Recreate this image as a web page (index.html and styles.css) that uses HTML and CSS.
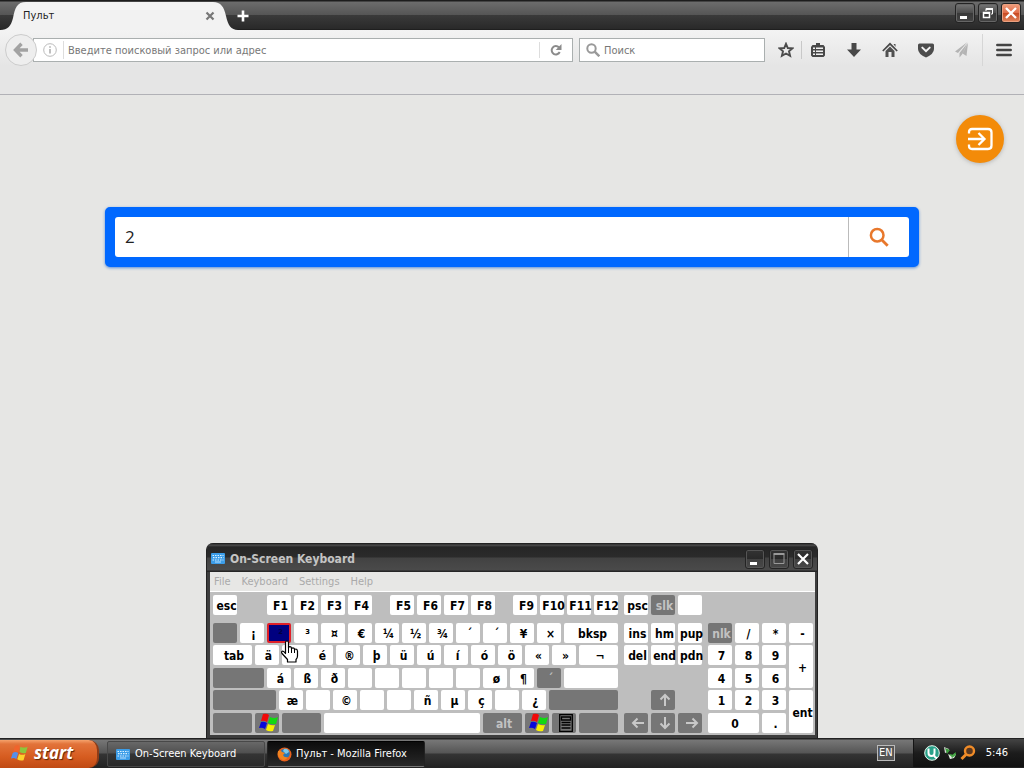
FILE: index.html
```html
<!DOCTYPE html>
<html lang="ru">
<head>
<meta charset="utf-8">
<title>Пульт</title>
<link rel="stylesheet" href="styles.css">
</head>
<body>
<svg class="defs" aria-hidden="true">
  <symbol id="flag" viewBox="0 0 20 20">
    <path fill="#f00808" d="M4 1q4-1 6 1L8 9Q5 7 2 8z"/>
    <path fill="#12d812" d="M11 4q4 2 8 0l-2 7q-4 1-8-1z"/>
    <path fill="#0808d8" d="M2 9q3-1 6 1l-2 6q-3-2-6-1z"/>
    <path fill="#f8f000" d="M9 11q4 2 7 1l-2 6q-4 1-7-1z"/>
  </symbol>
  <symbol id="kbd" viewBox="0 0 14 11">
    <rect width="14" height="11" rx="1" fill="#3c9de8"/>
    <path stroke="#d8f0ff" stroke-width="1.2" stroke-dasharray="1.5 1" d="M1.5 2.5h11M2 4.7h10.500M1.500 7h11"/>
    <path stroke="#b8e0ff" d="M4 9h6"/>
  </symbol>
</svg>
<header class="tabs">
  <div class="tab">
    <svg class="tab-shape" viewBox="0 0 240 28" aria-hidden="true"><path fill="#f2f2f2" d="M0 28C8 28 11 24 13 16C15 6 17 0 26 0H213C221 0 224 5 226 14C228 23 231 28 238 28z"/></svg>
    <span class="tab-name">Пульт</span>
    <button class="plain" aria-label="Закрыть вкладку"><svg width="10" height="10" viewBox="0 0 10 10"><path stroke="#777" stroke-width="2.200" d="M1.500 1.500l7 7M8.500 1.500l-7 7"/></svg></button>
  </div>
  <button class="plain new" aria-label="Новая вкладка"><svg width="12" height="12" viewBox="0 0 12 12"><path stroke="#fff" stroke-width="2.600" d="M6 0.500v11M0.500 6h11"/></svg></button>
  <div class="win-btns">
    <button class="wb" aria-label="Свернуть"><svg viewBox="0 0 18 18"><path fill="#fff" d="M4 12h7v3H4z"/></svg></button>
    <button class="wb" aria-label="Восстановить"><svg viewBox="0 0 18 18"><path fill="none" stroke="#fff" d="M7 7V4.500h6.500V10H12"/><path stroke="#fff" stroke-width="2" d="M7 5h7M4 9h7"/><path fill="none" stroke="#fff" stroke-width="1.500" d="M4.500 8.500h6v5h-6z"/></svg></button>
    <button class="wb red" aria-label="Закрыть"><svg viewBox="0 0 18 18"><path stroke="#fff" stroke-width="2.300" d="M4 4l10 10M14 4L4 14"/></svg></button>
  </div>
</header>
<nav class="toolbar">
  <button class="back" aria-label="Назад"><svg width="16" height="16" viewBox="0 0 16 16"><path fill="none" stroke="#a2a2a2" stroke-width="3.400" d="M15 8H3M8.500 1.800L2.500 8l6 6.200"/></svg></button>
  <div class="url">
    <svg width="14" height="14" viewBox="0 0 14 14"><circle cx="7" cy="7" r="6.300" fill="none" stroke="#bbb"/><path stroke="#aaa" stroke-width="1.500" d="M7 6v4.500M7 3.200v1.500"/></svg>
    <input aria-label="Адрес" placeholder="Введите поисковый запрос или адрес">
    <button class="plain reload" aria-label="Обновить"><svg width="12" height="12" viewBox="0 0 12 12"><path fill="none" stroke="#8b8b8b" stroke-width="2" d="M9 3.500A4.200 4.200 0 1 0 9.700 8"/><path fill="#8b8b8b" d="M11.500 0v6H5.700z"/></svg></button>
  </div>
  <div class="find">
    <svg width="14" height="14" viewBox="0 0 14 14"><circle cx="5.500" cy="5.500" r="4.200" fill="none" stroke="#999" stroke-width="2"/><path stroke="#999" stroke-width="2.400" d="M8.700 8.700l4.600 4.600"/></svg>
    <input aria-label="Поиск" placeholder="Поиск">
  </div>
  <div class="tools">
    <button class="plain star" aria-label="Закладка"><svg width="16" height="16" viewBox="0 0 16 16"><path fill="none" stroke="#4c4c4c" stroke-width="1.900" d="M8 1.800l1.800 4.200 4.700.3-3.500 3 1.100 4.600L8 11.500 3.900 13.900 5 9.300l-3.500-3 4.700-.3z"/></svg></button>
    <button class="plain" aria-label="Список закладок"><svg width="16" height="16" viewBox="0 0 16 16"><path fill="#484848" d="M6 1h4v2h3.500L15 5v8.500L13.500 15h-11L1 13.500V5l1.500-2H6z"/><path stroke="#f0f0f0" stroke-width="1.500" d="M3 6.300h2M6 6.300h7M3 9.300h2M6 9.300h7M3 12.200h2M6 12.200h7"/></svg></button>
    <button class="plain" aria-label="Загрузки"><svg width="16" height="16" viewBox="0 0 16 16"><path fill="#484848" d="M5.500 1h5v6.500H15l-7 7.500-7-7.500h4.500z"/></svg></button>
    <button class="plain" aria-label="Домой"><svg width="16" height="16" viewBox="0 0 16 16"><path fill="#505050" d="M3.500 9L8 4.500 12.500 9v6h-3v-5h-3v5h-3z"/><path fill="none" stroke="#484848" stroke-width="1.700" d="M.8 9L8 1.800 15.200 9"/><path fill="#505050" d="M11.500 2h2v3z"/></svg></button>
    <button class="plain" aria-label="Pocket"><svg width="16" height="16" viewBox="0 0 16 16"><path fill="#4c4c4c" d="M1.500 1.500h13q1.500 0 1.500 1.500v4q0 5-8 8.500Q0 12 0 7V3q0-1.500 1.500-1.500z"/><path fill="none" stroke="#f4f4f4" stroke-width="2" stroke-linecap="round" d="M4.300 5.600L8 9.200l3.700-3.600"/></svg></button>
    <button class="plain" aria-label="Поделиться"><svg width="16" height="16" viewBox="0 0 16 16"><path fill="#b4b4b4" d="M13.500 0L1 9.500l3 1.500zM13.500 1L5.500 11v4.500L8 12.500zM14 1l-1.500 13-4-2.500z"/></svg></button>
    <button class="plain menu" aria-label="Меню"><svg width="16" height="14" viewBox="0 0 16 14"><path stroke="#444" stroke-width="2.500" stroke-linecap="round" d="M1.300 2h13.400M1.300 7h13.400M1.300 12h13.400"/></svg></button>
  </div>
</nav>
<main class="page">
  <button class="exit" aria-label="Войти"><svg width="26" height="24" viewBox="0 0 26 24"><path fill="none" stroke="#fff" stroke-width="2.300" d="M2 6.500V5q0-3 3-3h16q3.500 0 3.500 3.500v13Q24.500 22 21 22H5q-3 0-3-3v-1.500M1 12h16M11.500 6l6 6-6 6"/></svg></button>
  <form class="search">
    <input aria-label="Запрос" value="2">
    <button type="button" aria-label="Найти"><svg width="20" height="20" viewBox="0 0 20 20"><circle cx="8.200" cy="8.200" r="6.300" fill="none" stroke="#e8782c" stroke-width="2.500"/><path stroke="#e8782c" stroke-width="2.800" d="M12.700 12.700l6 6"/></svg></button>
  </form>
</main>

<section class="osk" lang="en">
  <div class="osk-title">
    <svg width="14" height="11"><use href="#kbd"/></svg>
    <h1>On-Screen Keyboard</h1>
    <div class="osk-btns">
      <button class="wb" aria-label="Minimize"><svg viewBox="0 0 18 18"><path fill="#fff" d="M4 12h7v3H4z"/></svg></button>
      <button class="wb" aria-label="Maximize"><svg viewBox="0 0 18 18"><path fill="none" stroke="#999" d="M4 4.500h10v9H4z"/><path stroke="#999" stroke-width="2" d="M3.500 4h11"/></svg></button>
      <button class="wb" aria-label="Close"><svg viewBox="0 0 18 18"><path stroke="#fff" stroke-width="2.200" d="M4 4l10 10M14 4L4 14"/></svg></button>
    </div>
  </div>
  <div class="osk-menu"><button>File</button><button>Keyboard</button><button>Settings</button><button>Help</button></div>
  <div class="keys">
    <div class="block main-keys">
      <div class="row top"><button class="k">esc</button><span class="group"><button class="k">F1</button><button class="k">F2</button><button class="k">F3</button><button class="k">F4</button></span><span class="group"><button class="k">F5</button><button class="k">F6</button><button class="k">F7</button><button class="k">F8</button></span><span class="group"><button class="k">F9</button><button class="k">F10</button><button class="k">F11</button><button class="k">F12</button></span></div>
      <div class="row"><button class="k d" aria-label="`"></button><button class="k">¡</button><button class="k sel">²</button><button class="k">³</button><button class="k">¤</button><button class="k">€</button><button class="k">¼</button><button class="k">½</button><button class="k">¾</button><button class="k">´</button><button class="k">´</button><button class="k">¥</button><button class="k">×</button><button class="k grow">bksp</button></div>
      <div class="row"><button class="k w39">tab</button><button class="k">ä</button><button class="k" aria-label="w"></button><button class="k">é</button><button class="k">®</button><button class="k">þ</button><button class="k">ü</button><button class="k">ú</button><button class="k">í</button><button class="k">ó</button><button class="k">ö</button><button class="k">«</button><button class="k">»</button><button class="k grow">¬</button></div>
      <div class="row"><button class="k d w51" aria-label="caps"></button><button class="k">á</button><button class="k">ß</button><button class="k">ð</button><button class="k" aria-label="f"></button><button class="k" aria-label="g"></button><button class="k" aria-label="h"></button><button class="k" aria-label="j"></button><button class="k" aria-label="k"></button><button class="k">ø</button><button class="k">¶</button><button class="k d">´</button><button class="k grow" aria-label="enter"></button></div>
      <div class="row"><button class="k d w63" aria-label="shift"></button><button class="k">æ</button><button class="k" aria-label="x"></button><button class="k">©</button><button class="k" aria-label="v"></button><button class="k" aria-label="b"></button><button class="k">ñ</button><button class="k">µ</button><button class="k">ç</button><button class="k" aria-label="."></button><button class="k">¿</button><button class="k d grow" aria-label="right shift"></button></div>
      <div class="row"><button class="k d w39" aria-label="ctrl"></button><button class="k d" aria-label="win"><svg width="20" height="20"><use href="#flag"/></svg></button><button class="k d w39" aria-label="left alt"></button><button class="k grow" aria-label="space"></button><button class="k d w39">alt</button><button class="k d" aria-label="right win"><svg width="20" height="20"><use href="#flag"/></svg></button><button class="k d" aria-label="menu"><svg width="14" height="18" viewBox="0 0 14 18"><path fill="none" stroke="#000" stroke-width="1.300" d="M.7.700h12.600v16.600H.7zM2.500 3h9v3h-9zM2.500 8.500h9M2.500 11h9M2.500 14h9"/></svg></button><button class="k d w39" aria-label="right ctrl"></button></div>
    </div>
    <div class="block">
      <div class="row top"><button class="k">psc</button><button class="k d">slk</button><button class="k" aria-label="brk"></button></div>
      <div class="row"><button class="k">ins</button><button class="k">hm</button><button class="k">pup</button></div>
      <div class="row"><button class="k">del</button><button class="k">end</button><button class="k">pdn</button></div>
      <div class="row"></div>
      <div class="row mid"><button class="k d" aria-label="up"><svg class="arr" viewBox="0 0 14 14"><path d="M7 13V2M2.500 6.500L7 2l4.500 4.500"/></svg></button></div>
      <div class="row"><button class="k d" aria-label="left"><svg class="arr" viewBox="0 0 14 14"><path d="M13 7H2M6.500 2.500L2 7l4.500 4.500"/></svg></button><button class="k d" aria-label="down"><svg class="arr" viewBox="0 0 14 14"><path d="M7 1v11M2.500 7.500L7 12l4.500-4.500"/></svg></button><button class="k d" aria-label="right"><svg class="arr" viewBox="0 0 14 14"><path d="M1 7h11M7.500 2.500L12 7l-4.500 4.500"/></svg></button></div>
    </div>
    <div class="block numpad">
      <button class="k d">nlk</button><button class="k">/</button><button class="k">*</button><button class="k">-</button>
      <button class="k">7</button><button class="k">8</button><button class="k">9</button><button class="k tall">+</button>
      <button class="k">4</button><button class="k">5</button><button class="k">6</button>
      <button class="k">1</button><button class="k">2</button><button class="k">3</button><button class="k tall">ent</button>
      <button class="k wide">0</button><button class="k">.</button>
    </div>
  </div>
  <svg class="cursor" width="18" height="23" viewBox="0 0 18 23" aria-hidden="true"><path fill="#fff" stroke="#000" stroke-width="1.200" stroke-linejoin="round" d="M4.500 13V2.500Q4.500 1 6 1t1.500 1.500V8q0-1.300 1.400-1.300T10.500 8v1q0-1.200 1.400-1.200T13.500 9v1.200q0-1.200 1.300-1.200T16.500 11v5q0 2-1.500 3.500V22H6.500v-2.500L1 13.500q-1-1.800.3-2.300t3.200 2.300z"/><path stroke="#000" d="M7.500 8v5M10.500 9v4M13.500 10v3"/></svg>
</section>

<footer class="taskbar" lang="en">
  <button class="start"><svg width="19" height="18" viewBox="0 0 20 20"><path fill="#f0642c" d="M5 2q3-1 5 0L9 9Q6 7 3 9z"/><path fill="#8cc63c" d="M11 3q4 2 8 0l-2 7q-3 1-7-1z"/><path fill="#5590e8" d="M2.500 10q3-2 6 0l-2 7q-2-2-6-1z"/><path fill="#fcd22c" d="M9.500 11q4 2 7 0l-2 7q-4 1-7-1z"/></svg>start</button>
  <button class="task"><svg width="14" height="11"><use href="#kbd"/></svg>On-Screen Keyboard</button>
  <button class="task active"><svg width="15" height="15" viewBox="0 0 15 15"><circle cx="7.500" cy="7.500" r="7" fill="#e8601c"/><circle cx="8" cy="6.500" r="4.800" fill="#2878b8"/><path fill="#7cc8e8" d="M7 2q4-1 5 3l-3 2-3-3z"/><path fill="#f08420" d="M1 4q3-1 4 1l3 1-2 2q1 3 5 2-3 5-7 2Q0 10 1 4z"/></svg>Пульт - Mozilla Firefox</button>
  <span class="lang">EN</span>
  <div class="tray">
    <svg width="16" height="16" viewBox="0 0 16 16"><circle cx="8" cy="8" r="7.300" fill="#28a088" stroke="#e8f8f0"/><path fill="none" stroke="#fff" stroke-width="2" d="M4.500 3.500V8q0 3 3 3t3-3V3.500M10 10q1 3 3 3"/></svg>
    <svg width="14" height="14" viewBox="0 0 14 14"><path fill="#d8d8d8" d="M1 1l5 2-1 3-3 1z"/><path fill="#3c9c3c" d="M2 2l5 2-3 4zM6 8l3 1 4-3-1 5-5 2z"/><path fill="#e8e8e8" d="M5 8l3 2 5-2-2 4-4 1z"/><path fill="#48a848" d="M7 8l3 1 2-2 1 2-4 3z"/></svg>
    <svg width="16" height="16" viewBox="0 0 16 16"><circle cx="9.500" cy="6" r="4.500" fill="#5a3820" stroke="#f08c28" stroke-width="2.400"/><path stroke="#f08c28" stroke-width="3" d="M6 9.500L1.500 14"/></svg>
    <time>5:46</time>
  </div>
</footer>
</body>
</html>
```
FILE: styles.css
```css
* { box-sizing: border-box; }
body {
  margin: 0;
  height: 100vh;
  display: flex;
  flex-direction: column;
  position: relative;
  overflow: hidden;
  background: #e6e6e4;
  font: 11px/14px "DejaVu Sans Condensed", "DejaVu Sans", sans-serif;
  color: #222;
}
button, input { font: inherit; color: inherit; margin: 0; padding: 0; border: 0; background: none; outline: 0; }
svg { display: block; flex: none; }
.defs { position: absolute; width: 0; height: 0; }
.plain { display: flex; align-items: center; justify-content: center; }

.tabs {
  display: flex;
  align-items: center;
  height: 30px;
  flex: none;
  background: linear-gradient(#1c1c1c 0 1px, #6c6c6c 2px, #555 15px, #3a3a3a 15px, #292929 29px, #151515 30px);
}
.tab { position: relative; width: 236px; height: 28px; margin: 2px 0 0; padding: 0 21px 0 23px; display: flex; align-items: center; justify-content: space-between; }
.tab-shape { position: absolute; left: 0; top: 0; width: 240px; height: 28px; }
.tab-name, .tab .plain { position: relative; }
.new { width: 14px; height: 28px; margin-top: 2px; }
.win-btns { display: flex; gap: 3px; margin: 0 3px 4px auto; }
.wb { width: 20px; height: 20px; border: 1px solid #242424; border-radius: 3px; background: linear-gradient(#777, #4b4b4b 50%, #383838 50%, #444); box-shadow: inset 0 0 0 1px #666; }
.wb.red { background: linear-gradient(#f0a080, #e06c48 50%, #c84820 50%, #e08860); box-shadow: inset 0 0 0 1px #eaa080; }

.toolbar { display: flex; align-items: flex-start; height: 65px; flex: none; padding: 4px 0 0 5px; border-bottom: 1px solid #b1b1b6; background: linear-gradient(#f3f3f3, #e5e5e5 36px); }
.back { width: 32px; height: 32px; border: 1px solid #ccc; border-radius: 50%; background: #eee; display: flex; align-items: center; justify-content: center; position: relative; flex: none; }
.url, .find { display: flex; align-items: center; height: 24px; margin-top: 4px; border: 1px solid #aaafaf; background: #fff; }
.url { flex: 1; margin-left: -4px; padding-left: 9px; }
.url input { flex: 1; min-width: 0; height: 18px; margin-left: 6px; padding-left: 4px; border-left: 1px solid #ddd; }
.url input::placeholder, .find input::placeholder { color: #777; opacity: 1; }
.reload { width: 33px; height: 16px; border-left: 1px solid #ddd; }
.find { width: 186px; margin-left: 6px; padding-left: 6px; gap: 4px; }
.find input { flex: 1; min-width: 0; height: 18px; }
.tools { display: flex; margin-left: 5px; }
.tools .plain { width: 36px; height: 32px; }
.tools .star { width: 32px; margin-right: -2px; background: linear-gradient(#c8c8c8, #c8c8c8) right center / 1px 18px no-repeat; }
.tools .menu { width: 42px; margin-left: 2px; border-left: 1px solid #d6d6d6; }

.page { flex: 1; display: flex; flex-direction: column; align-items: center; padding: 20px; }
.exit { align-self: flex-end; width: 48px; height: 48px; border-radius: 50%; background: #f38b09; box-shadow: 0 1px 4px #8888; display: flex; align-items: center; justify-content: center; }
.search { display: flex; width: 100%; max-width: 814px; margin: 44px 0 0; border: 10px solid #0068ff; border-radius: 5px; background: #0068ff; box-shadow: 0 1px 3px #5b8fd8; }
.search input { flex: 1; min-width: 0; height: 40px; padding: 0 10px 2px; background: #fff; border-radius: 3px 0 0 3px; font: 17px/24px "Open Sans", sans-serif; }
.search button { width: 61px; display: flex; align-items: center; justify-content: center; background: #fff; border-left: 1px solid #bbb; border-radius: 0 3px 3px 0; }

.osk { position: absolute; left: 0; right: 0; bottom: 29px; width: 612px; margin: 0 auto; padding: 0 2px 3px 3px; border-radius: 7px 7px 0 0; border: 1px solid #222; border-top: 0; background: #3d3d3d; }
.osk-title { display: flex; align-items: center; height: 29px; margin: 0 -2px 0 -3px; padding: 2px 4px 0; gap: 5px; border-radius: 7px 7px 0 0; background: linear-gradient(#222 0 1px, #505050 2px, #262626 4px, #2b2b2b 14px, #424242 15px, #4a4a4a 27px, #252525 28px); }
.osk-title h1 { margin: 0; font: bold 12px/16px "DejaVu Sans Condensed", sans-serif; color: #c4c4c4; }
.osk-btns { display: flex; gap: 4px; margin-left: auto; }
.osk-btns .wb { background: linear-gradient(#333, #292929 50%, #404040 50%, #484848); box-shadow: inset 0 0 0 1px #555; }
.osk-menu { display: flex; height: 20px; padding: 0 4px; gap: 11px; background: #e7e7e5; border-bottom: 1px solid #fff; color: #aaa; }
.keys { display: flex; gap: 6px; padding: 3px 2px 2px 3px; background: #bebebe; }
.block { display: flex; flex-direction: column; gap: 2px; flex: none; }
.main-keys { width: 405px; }
.row, .group { display: flex; gap: 3px; }
.row { height: 20px; }
.row:nth-child(3), .row:nth-child(5) { height: 21px; }
.row.top { justify-content: space-between; margin-bottom: 6px; }
.row.top > .k:first-child { margin-right: 12px; }
.block:not(.main-keys) .row.top > .k { margin-right: 0; }
.row.mid { justify-content: center; }
.k { width: 24px; height: 20px; flex: none; padding: 2px 0 0 3px; border-radius: 2px; background: #fff; color: #000; font: bold 12px/16px "DejaVu Sans Condensed", sans-serif; white-space: nowrap; display: flex; align-items: center; justify-content: center; }
.k.d { background: #767676; color: #c2c2c2; }
.k svg { margin: -2px 0 0; }
.k.sel { background: #000080; border: 2px solid #e02028; color: #000040; }
.k.w39 { width: 39px; }
.k.w51 { width: 51px; }
.k.w63 { width: 63px; }
.k.grow { flex: 1; }
.arr { width: 14px; height: 14px; fill: none; stroke: #c8c8c8; stroke-width: 2; }
.numpad { display: grid; grid-template-columns: repeat(4, 24px); grid-template-rows: 20px 21px 20px 21px 20px; gap: 2px 3px; padding-top: 28px; }
.numpad .tall { grid-row: span 2; height: 43px; }
.numpad .wide { grid-column: span 2; width: 51px; }
.cursor { position: absolute; left: 74px; top: 97px; }

.taskbar { display: flex; align-items: center; height: 30px; flex: none; background: linear-gradient(#222 0 1px, #777 2px, #555 15px, #343434 16px, #222); color: #fff; }
.start { display: flex; align-items: center; width: 99px; height: 28px; margin-top: 2px; padding: 0 0 2px 10px; gap: 5px; border-radius: 0 10px 10px 0; background: linear-gradient(#f5a26c, #e2733a 4px, #d65c20 60%, #c04a14); border-right: 2px solid #8d3c18; font: italic bold 17px/24px "Open Sans", sans-serif; text-shadow: 1px 1px 1px #5a2408; }
.task { display: flex; align-items: center; width: 158px; height: 26px; margin: 2px 0 0 8px; padding-left: 8px; gap: 5px; border: 1px solid #484848; border-radius: 2px; background: linear-gradient(#686868, #505050 45%, #343434 50%, #2a2a2a); white-space: nowrap; }
.task.active { margin-left: 2px; padding-left: 9px; gap: 4px; background: linear-gradient(#0c0c0c, #282828); border-color: #000 #222 #777; }
.lang { margin-left: auto; margin-right: 18px; padding: 0 1px; border: 1px solid #bbb; background: #555; }
.tray { display: flex; align-items: center; height: 28px; padding: 0 16px 0 10px; gap: 3px; border-left: 1px solid #151515; background: linear-gradient(#444, #1c1c1c 50%, #111); }
.tray time { margin-left: 7px; }
```
